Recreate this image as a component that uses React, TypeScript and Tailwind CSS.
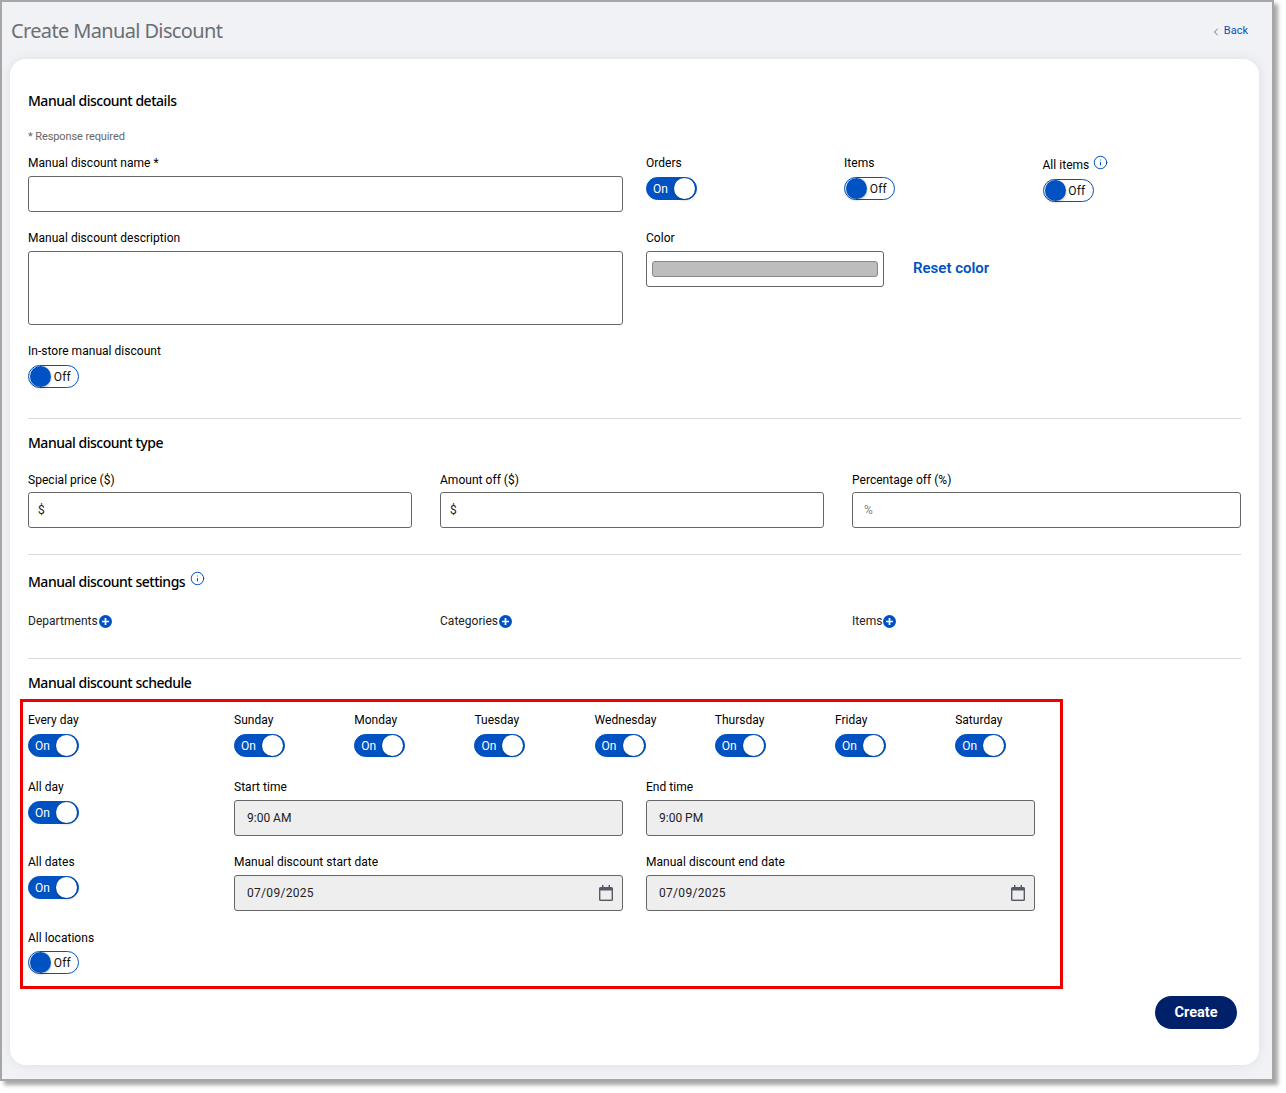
import { ChevronLeft, Info } from 'lucide-react'

const days = ['Sunday', 'Monday', 'Tuesday', 'Wednesday', 'Thursday', 'Friday', 'Saturday']

function Toggle({ on }: { on: boolean }) {
  return (
    <div
      className={`flex h-[23px] w-[51px] items-center justify-between rounded-full border border-[#0052c2] text-xs ${
        on ? 'bg-[#0052c2] pl-[6px] pr-px text-white' : 'bg-white pl-px pr-[7px] text-[#111]'
      }`}
    >
      {on ? (
        <>
          <span>On</span>
          <span className="h-[21px] w-[21px] rounded-full bg-white shadow-[0_1px_3px_rgba(0,0,0,0.3)]" />
        </>
      ) : (
        <>
          <span className="h-[21px] w-[21px] rounded-full bg-[#0052c2] shadow-[0_1px_3px_rgba(0,0,0,0.3)]" />
          <span className="tracking-[0.2px]">Off</span>
        </>
      )}
    </div>
  )
}

function Label({ children }: { children: React.ReactNode }) {
  return <div className="h-[14px] text-xs leading-[14px] tracking-[0.03px] text-black">{children}</div>
}

function Heading({ children }: { children: React.ReactNode }) {
  return (
    <h2 className="font-['Noto_Sans',sans-serif] text-sm font-medium leading-5 tracking-[-0.48px] text-black">
      {children}
    </h2>
  )
}

function Field({ value, muted, disabled }: { value?: string; muted?: boolean; disabled?: boolean }) {
  return (
    <div
      className={`flex h-9 items-center rounded-[3px] border border-[#666] text-xs ${
        disabled ? 'bg-[#eeeeee] px-3 text-[#222]' : 'bg-white px-[9px]'
      } ${muted ? 'pl-[11px] text-[#888]' : 'text-[#222]'}`}
    >
      {value}
    </div>
  )
}

function CalendarIcon() {
  return (
    <svg width="14" height="16" viewBox="0 0 14 16" fill="none">
      <path d="M3 0h1.5v2h5V0H11v2h1.5A1.5 1.5 0 0 1 14 3.5v11a1.5 1.5 0 0 1-1.5 1.5h-11A1.5 1.5 0 0 1 0 14.5v-11A1.5 1.5 0 0 1 1.5 2H3z" fill="#555b66" />
      <rect x="1.4" y="5.5" width="11.2" height="9.1" fill="#eeeeee" />
    </svg>
  )
}

function DateField({ value }: { value: string }) {
  return (
    <div className="flex h-9 items-center justify-between rounded-[3px] border border-[#666] bg-[#eeeeee] pl-3 pr-[9px] text-xs tracking-[0.3px] text-[#222]">
      {value}
      <CalendarIcon />
    </div>
  )
}

function PlusIcon() {
  return (
    <svg width="13" height="13" viewBox="0 0 13 13" className="ml-px">
      <circle cx="6.5" cy="6.5" r="6.5" fill="#0052c2" />
      <path d="M6.5 3v7M3 6.5h7" stroke="#fff" strokeWidth="1.7" />
    </svg>
  )
}

function AddLabel({ label }: { label: string }) {
  return (
    <div className="flex items-center text-xs tracking-[0.03px] text-[#222]">
      {label}
      <PlusIcon />
    </div>
  )
}

export default function App() {
  return (
    <div className="h-[1093px] w-[1286px] bg-white font-['Roboto',sans-serif]">
      <div className="h-[1081px] w-[1274px] border-2 border-[#a6a6a6] bg-[#f1f2f6] shadow-[4px_4px_4px_rgba(0,0,0,0.35)]">
        <header className="flex h-[57px] items-center justify-between pb-px pl-[9px] pr-6 pt-[2px]">
          <h1 className="font-['Noto_Sans',sans-serif] text-xl tracking-[-0.64px] text-[#6b6f72]">Create Manual Discount</h1>
          <a className="mt-px flex items-center gap-[2px] text-[11px] text-[#0052c2]">
            <ChevronLeft size={12} className="text-[#777]" />
            Back
          </a>
        </header>

        <main className="ml-2 h-[1006px] w-[1249px] rounded-[16px] bg-white px-[18px] pt-8 shadow-[0_0_12px_rgba(0,0,0,0.08)]">
          <Heading>Manual discount details</Heading>
          <p className="mt-[19px] text-[11px] leading-[14px] tracking-[-0.1px] text-[#666]">* Response required</p>

          <div className="mt-3 flex gap-[23px]">
            <div className="w-[595px]">
              <Label>Manual discount name *</Label>
              <div className="mt-[6px]">
                <Field />
              </div>
              <div className="mt-[19px]">
                <Label>Manual discount description</Label>
              </div>
              <div className="mt-[6px] h-[74px] rounded-[3px] border border-[#666]" />
              <div className="mt-[19px]">
                <Label>In-store manual discount</Label>
              </div>
              <div className="mt-[7px]">
                <Toggle on={false} />
              </div>
            </div>

            <div className="flex-1">
              <div className="flex">
                <div className="w-[198px]">
                  <Label>Orders</Label>
                  <div className="mt-[7px]">
                    <Toggle on />
                  </div>
                </div>
                <div className="w-[198.5px]">
                  <Label>Items</Label>
                  <div className="mt-[7px]">
                    <Toggle on={false} />
                  </div>
                </div>
                <div>
                  <div className="flex items-start gap-[4px] pt-[2px]">
                    <Label>All items</Label>
                    <Info size={15} strokeWidth={1.6} className="-mt-[3px] text-[#0052c2]" />
                  </div>
                  <div className="mt-[7px]">
                    <Toggle on={false} />
                  </div>
                </div>
              </div>
              <div className="mt-[29px]">
                <Label>Color</Label>
              </div>
              <div className="mt-[6px] flex items-start gap-[29px]">
                <div className="flex h-9 w-[238px] items-center rounded-[3px] border border-[#666] px-[5px]">
                  <div className="h-4 w-full rounded-[3px] border border-[#888] bg-[#bdbdbd]" />
                </div>
                <a className="mt-[6px] text-[15px] font-semibold leading-[22px] text-[#0052c2]">Reset color</a>
              </div>
            </div>
          </div>

          <hr className="mt-[30px] border-[#d9d9d9]" />
          <div className="mt-[14px]">
            <Heading>Manual discount type</Heading>
          </div>
          <div className="mt-[20px] grid grid-cols-[384px_384px_389px] gap-x-7">
            <div>
              <Label>Special price ($)</Label>
              <div className="mt-[5px]">
                <Field value="$" />
              </div>
            </div>
            <div>
              <Label>Amount off ($)</Label>
              <div className="mt-[5px]">
                <Field value="$" />
              </div>
            </div>
            <div>
              <Label>Percentage off (%)</Label>
              <div className="mt-[5px]">
                <Field value="%" muted />
              </div>
            </div>
          </div>

          <hr className="mt-[26px] border-[#d9d9d9]" />
          <div className="mt-[17px] flex items-start gap-[5px]">
            <Heading>Manual discount settings</Heading>
            <Info size={15} strokeWidth={1.6} className="-mt-px text-[#0052c2]" />
          </div>
          <div className="mt-[21px] grid grid-cols-[384px_384px_389px] gap-x-7">
            <AddLabel label="Departments" />
            <AddLabel label="Categories" />
            <AddLabel label="Items" />
          </div>

          <hr className="mt-[29px] border-[#d9d9d9]" />
          <div className="mt-[14px]">
            <Heading>Manual discount schedule</Heading>
          </div>

          {/* annotated schedule block */}
          <section className="relative mt-[6px] h-[290px] pt-[14px]">
            <div className="absolute -left-2 top-0 h-[290px] w-[1043px] border-[3px] border-[#ee0000]" />
            <div className="flex">
              <div className="w-[206px]">
                <Label>Every day</Label>
                <div className="mt-[7px]">
                  <Toggle on />
                </div>
              </div>
              {days.map((day) => (
                <div key={day} className="w-[120.2px] shrink-0">
                  <Label>{day}</Label>
                  <div className="mt-[7px]">
                    <Toggle on />
                  </div>
                </div>
              ))}
            </div>

            <div className="mt-[23px] flex">
              <div className="w-[206px]">
                <Label>All day</Label>
                <div className="mt-[7px]">
                  <Toggle on />
                </div>
              </div>
              <div className="w-[389px]">
                <Label>Start time</Label>
                <div className="mt-[6px]">
                  <Field value="9:00 AM" disabled />
                </div>
              </div>
              <div className="ml-[23px] w-[389px]">
                <Label>End time</Label>
                <div className="mt-[6px]">
                  <Field value="9:00 PM" disabled />
                </div>
              </div>
            </div>

            <div className="mt-[19px] flex">
              <div className="w-[206px]">
                <Label>All dates</Label>
                <div className="mt-[7px]">
                  <Toggle on />
                </div>
              </div>
              <div className="w-[389px]">
                <Label>Manual discount start date</Label>
                <div className="mt-[6px]">
                  <DateField value="07/09/2025" />
                </div>
              </div>
              <div className="ml-[23px] w-[389px]">
                <Label>Manual discount end date</Label>
                <div className="mt-[6px]">
                  <DateField value="07/09/2025" />
                </div>
              </div>
            </div>

            <div className="mt-[20px]">
              <Label>All locations</Label>
              <div className="mt-[6px]">
                <Toggle on={false} />
              </div>
            </div>
          </section>

          <div className="mt-[7px] flex justify-end pr-[4px]">
            <button className="h-[33px] w-[82px] rounded-full bg-[#002169] text-[14.5px] font-bold text-white">Create</button>
          </div>
        </main>
      </div>
    </div>
  )
}
